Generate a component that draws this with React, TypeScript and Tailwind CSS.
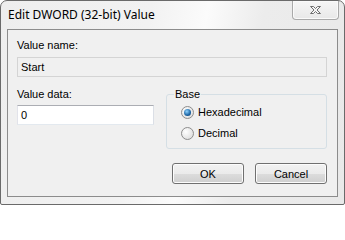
import React from 'react';

const body = { fontFamily: '"Liberation Sans", Arial, sans-serif' };
const caption = { fontFamily: '"Noto Sans", "Segoe UI", sans-serif' };

const Radio: React.FC<{ checked?: boolean; label: string }> = ({ checked, label }) => (
  <div className="flex items-center h-4 gap-[4px]">
    <div className="w-[13px] h-[13px] rounded-full border border-[#8d8d8d] bg-[radial-gradient(circle_at_35%_35%,#ffffff,#d6d6d6)] flex items-center justify-center">
      {checked && (
        <div className="w-[7px] h-[7px] rounded-full bg-[radial-gradient(circle_at_40%_35%,#8fd3ff,#1a64a4_60%,#0f3a62)]" />
      )}
    </div>
    <span className="text-[11px] leading-4 text-black">{label}</span>
  </div>
);

const Button: React.FC<{ label: string }> = ({ label }) => (
  <button className="w-[72px] h-[21px] rounded-[3px] border border-[#707070] bg-[linear-gradient(#f2f2f2_0%,#ebebeb_50%,#dddddd_51%,#cfcfcf_100%)] shadow-[inset_0_0_0_1px_#fcfcfc] text-[11px] leading-4 text-black">
    {label}
  </button>
);

export default function App() {
  return (
    <div className="w-[345px] h-[205px] bg-white" style={body}>
      <div className="w-full h-full flex flex-col border border-[#6a6a6a] rounded-t-[7px] rounded-b-[2px] bg-[linear-gradient(100deg,#eeeeee_0%,#f2f2f2_40%,#fbfbfb_55%,#ececec_70%,#e9e9e9_100%)] px-[6px] pb-[7px]">
        {/* title bar */}
        <div className="h-[28px] flex items-start">
          <span className="mt-[6px] pl-px text-[12px] leading-4 text-black" style={caption}>
            Edit DWORD (32-bit) Value
          </span>
          <div className="ml-auto mr-[-1px] w-[47px] h-[19px] rounded-b-[4px] border border-t-0 border-[#a9a9a9] bg-[linear-gradient(#f6f6f6,#e8e8e8)] shadow-[inset_0_0_0_1px_#fafafa] flex items-center justify-center">
            <svg width="13" height="10" viewBox="0 0 13 10">
              <path
                d="M1.5 1.5h3l2 2 2-2h3l-3.5 3.5 3.5 3.5h-3l-2-2-2 2h-3l3.5-3.5z"
                fill="#f4f4f4"
                stroke="#6e6e6e"
                strokeWidth="1"
                strokeLinejoin="round"
              />
            </svg>
          </div>
        </div>

        {/* client area */}
        <div className="flex-1 flex flex-col border border-[#8c8c8c] bg-[#f0f0f0] pt-[7px] pl-[9px] pr-[10px]">
          <div className="text-[11px] leading-4 text-black">Value name:</div>
          <div className="mt-[4px] h-[20px] border border-[#d4d4d4] bg-[#f0f0f0] flex items-center pl-[3px] text-[11px] leading-4 text-black">
            Start
          </div>

          <div className="mt-[9px] flex">
            <div className="w-[137px]">
              <div className="text-[11px] leading-4 text-black">Value data:</div>
              <div className="mt-[3px] h-[20px] border border-[#abadb3] border-r-[#dbdfe6] border-b-[#e3e9ef] border-l-[#e2e3ea] bg-white flex items-center pl-[3px] text-[11px] leading-4 text-black">
                0
              </div>
            </div>
            <fieldset className="ml-[12px] flex-1 h-[63px] border border-[#d5dfe5] rounded-[3px] pl-[14px]">
              <legend className="ml-[-7px] px-[1px] text-[11px] leading-4 text-black">Base</legend>
              <div className="mt-[2px]">
                <Radio checked label="Hexadecimal" />
              </div>
              <div className="mt-[5px]">
                <Radio label="Decimal" />
              </div>
            </fieldset>
          </div>

          <div className="mt-[14px] flex justify-end gap-[11px]">
            <Button label="OK" />
            <Button label="Cancel" />
          </div>
        </div>
      </div>
    </div>
  );
}
